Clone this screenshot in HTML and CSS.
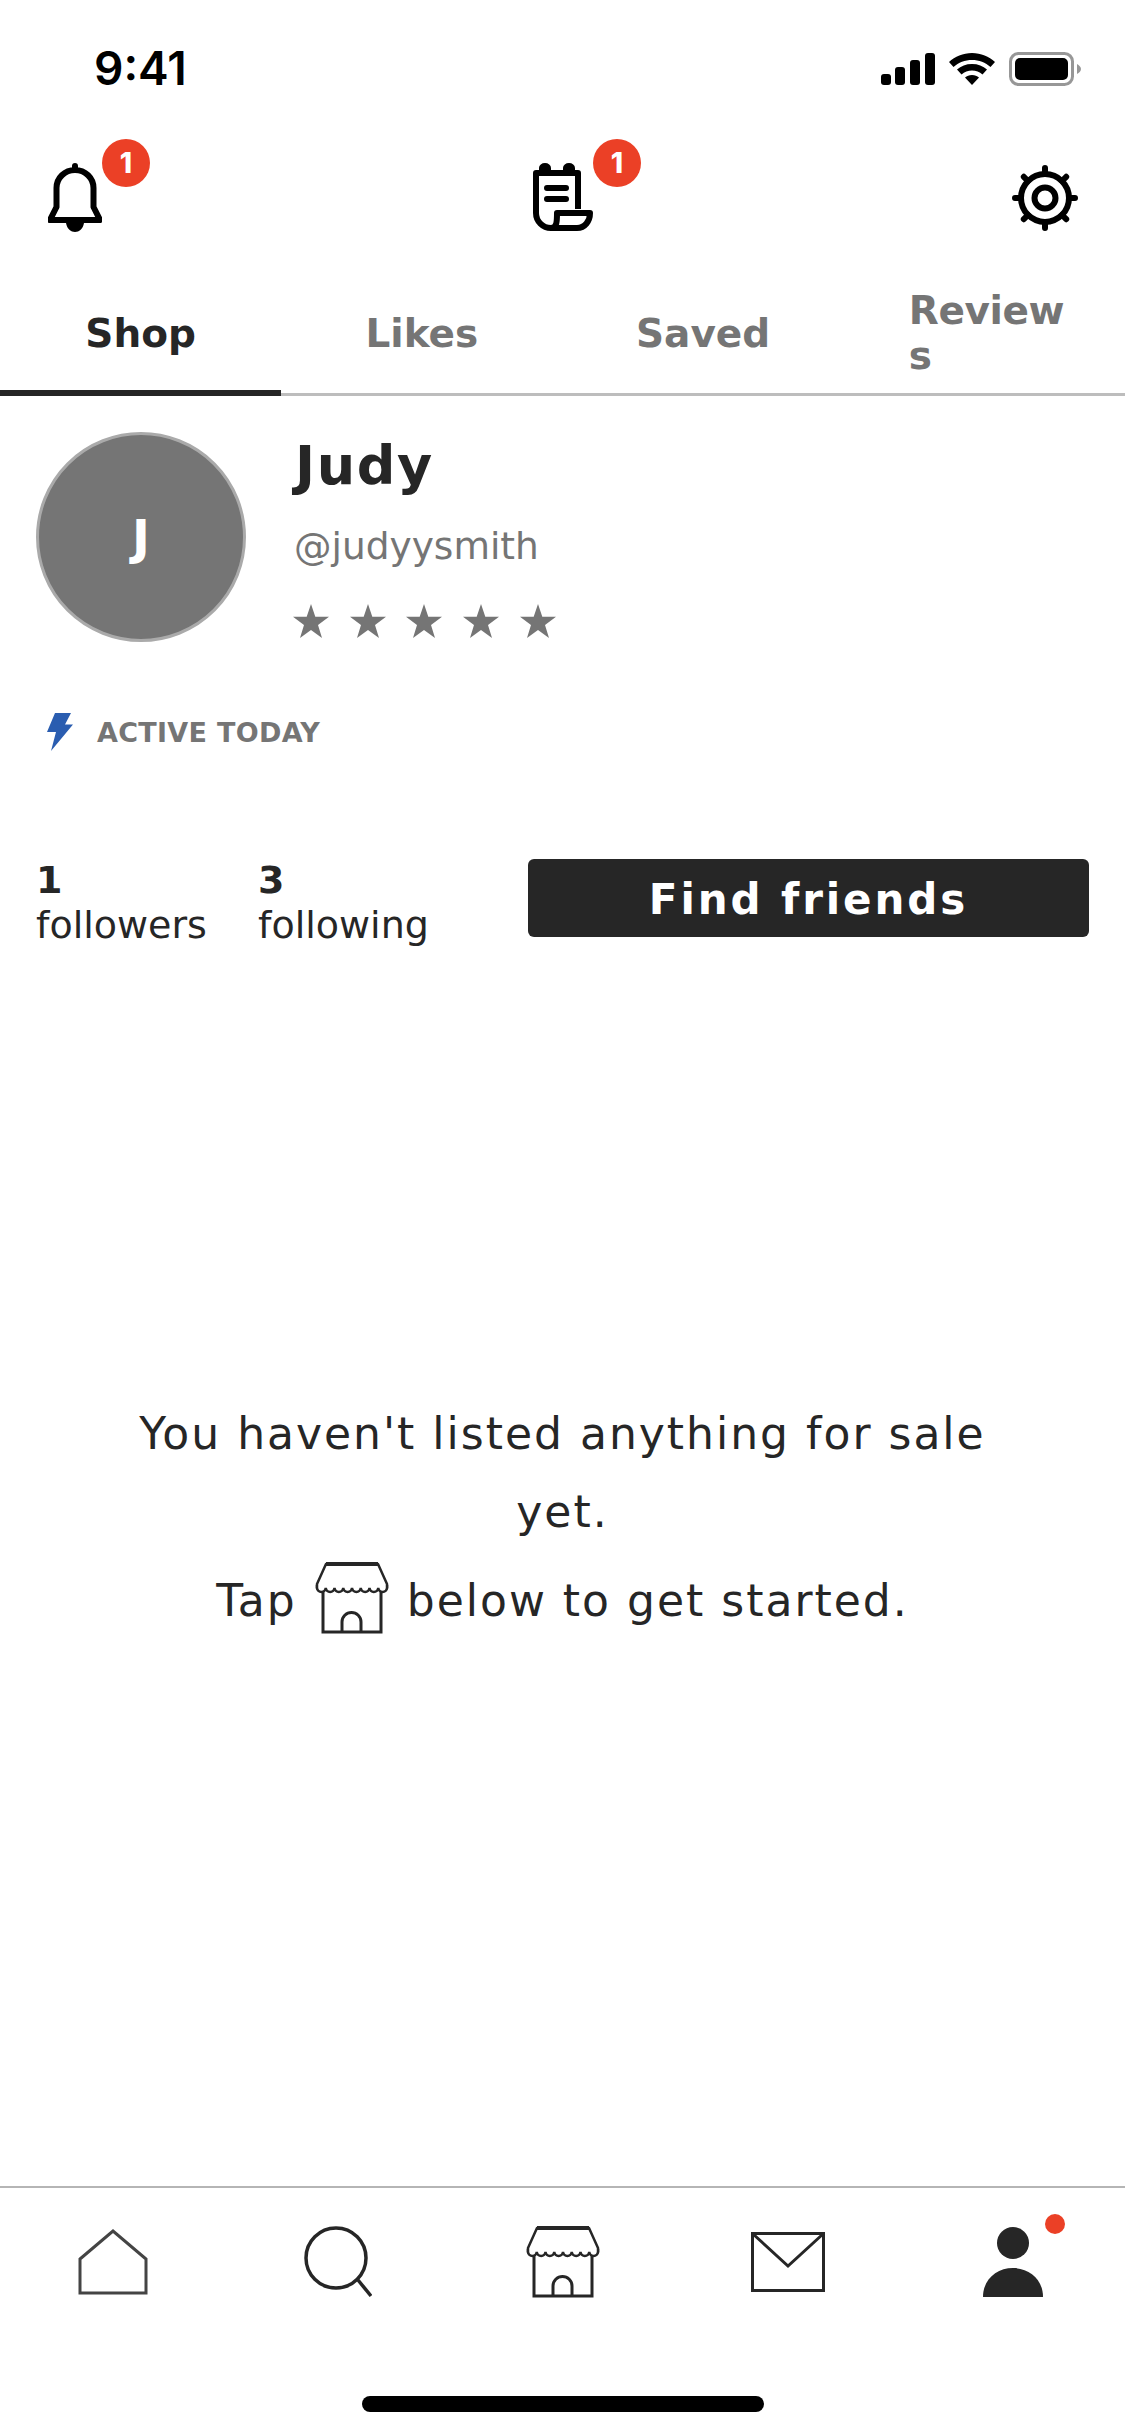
FILE: index.html
```html
<!DOCTYPE html>
<html>
	<head>
		<meta charset="UTF-8">
		<title>Profile</title>
		<link rel="stylesheet" href="styles.css">
	</head>
	<body>
		<svg class="defs" width="0" height="0">
			<symbol id="shop" viewBox="0 0 74 72">
				<path d="M11 2H63L72 22L72 26H2L2 22Z" fill="none" stroke="currentColor" stroke-width="2.500" stroke-linejoin="round"/>
				<path d="M11 2H63" stroke="currentColor" stroke-width="4"/>
				<path d="M2 23V26a4.400 4.500 0 0 0 8.750 0a4.400 4.500 0 0 0 8.750 0a4.400 4.500 0 0 0 8.750 0a4.400 4.500 0 0 0 8.750 0a4.400 4.500 0 0 0 8.750 0a4.400 4.500 0 0 0 8.750 0a4.400 4.500 0 0 0 8.750 0a4.400 4.500 0 0 0 8.750 0V23" fill="#fff" stroke="currentColor" stroke-width="2.500"/>
				<path d="M8 30V70H66V30M27 70V60a9.500 9.500 0 0 1 19 0V70" fill="none" stroke="currentColor" stroke-width="3"/>
			</symbol>
		</svg>
		<div class="status">
			<span class="time">9:41</span>
			<div class="status-icons">
				<svg width="54" height="32" viewBox="0 0 54 32"><rect x="0" y="21" width="10" height="11" rx="3"/><rect x="14" y="14" width="10" height="18" rx="3"/><rect x="29" y="7" width="10" height="25" rx="3"/><rect x="44" y="0" width="10" height="32" rx="3"/></svg>
				<svg width="46" height="32" viewBox="0 0 46 32"><path d="M23 0C14 0 6 3.500 0 9l4.500 5C9.500 9.500 16 7 23 7s13.500 2.500 18.500 7L46 9C40 3.500 32 0 23 0Z"/><path d="M23 11c-6 0-11 2-15 5.500l4.500 5C15.500 19 19 17.500 23 17.500s7.500 1.500 10.500 4l4.500-5C34 13 29 11 23 11Z"/><path d="M23 22c-3 0-5 1-7 2.500L23 32l7-7.500C28 23 26 22 23 22Z"/></svg>
				<svg width="72" height="34" viewBox="0 0 72 34"><rect x="1.500" y="1.500" width="62" height="31" rx="8" fill="none" stroke="#979797" stroke-width="3"/><rect x="6" y="6" width="53" height="22" rx="5"/><path d="M68 12c2 1 4 3 4 5s-2 4-4 5Z" fill="#979797"/></svg>
			</div>
		</div>
		<div class="top-bar">
			<a class="top-icon">
				<svg width="54" height="69" viewBox="0 0 54 69"><path d="M27 3V7M8.500 44V25a18.500 18 0 0 1 37 0V44L52 57H2Z" fill="none" stroke="#000" stroke-width="6" stroke-linecap="round" stroke-linejoin="round"/><path d="M18 60H36C35 66 31 69 27 69S19 66 18 60Z"/></svg>
				<span class="badge">1</span>
			</a>
			<a class="top-icon receipt">
				<svg width="60" height="68" viewBox="0 0 60 68"><path d="M45 46V10H3V50A15 15 0 0 0 18 65H44C52 65 57 58 57 50H24C24 58 24 65 18 65" fill="none" stroke="#000" stroke-width="6" stroke-linejoin="round"/><path d="M14 25H33M14 36H33" fill="none" stroke="#000" stroke-width="6" stroke-linecap="round"/><path d="M6 9H18V5a6 5 0 0 0-12 0ZM30 9H42V5a6 5 0 0 0-12 0Z"/></svg>
				<span class="badge">1</span>
			</a>
			<a class="top-icon gear">
				<svg width="66" height="66" viewBox="0 0 66 66" fill="none" stroke="#000" stroke-width="6" stroke-linecap="round"><circle cx="33" cy="33" r="24"/><circle cx="33" cy="33" r="10.500"/><path d="M33 3V9M33 57V63M3 33H9M57 33H63M11.800 11.800L16 16M50 50L54.200 54.200M11.800 54.200L16 50M50 16L54.200 11.800"/></svg>
			</a>
		</div>
		<div class="tabs">
			<div class="tab active"><span>Shop</span></div>
			<div class="tab"><span>Likes</span></div>
			<div class="tab"><span>Saved</span></div>
			<div class="tab"><span>Reviews</span></div>
		</div>
		<div class="profile">
			<div class="avatar">J</div>
			<div class="who">
				<div class="name">Judy</div>
				<div class="handle">@judyysmith</div>
				<div class="stars">
					<svg width="36" height="34" viewBox="0 0 36 34"><path d="M18 0L22.300 12.800H36L25 21L29 34L18 26L7 34L11 21L0 12.800H13.700Z"/></svg>
					<svg width="36" height="34" viewBox="0 0 36 34"><path d="M18 0L22.300 12.800H36L25 21L29 34L18 26L7 34L11 21L0 12.800H13.700Z"/></svg>
					<svg width="36" height="34" viewBox="0 0 36 34"><path d="M18 0L22.300 12.800H36L25 21L29 34L18 26L7 34L11 21L0 12.800H13.700Z"/></svg>
					<svg width="36" height="34" viewBox="0 0 36 34"><path d="M18 0L22.300 12.800H36L25 21L29 34L18 26L7 34L11 21L0 12.800H13.700Z"/></svg>
					<svg width="36" height="34" viewBox="0 0 36 34"><path d="M18 0L22.300 12.800H36L25 21L29 34L18 26L7 34L11 21L0 12.800H13.700Z"/></svg>
				</div>
			</div>
		</div>
		<div class="active-today">
			<svg width="26" height="38" viewBox="0 0 26 40" preserveAspectRatio="none"><path d="M8 0H24L18 12H26L4 40L9 20H0Z" fill="#2a5db0"/></svg>
			<span>ACTIVE TODAY</span>
		</div>
		<div class="stats">
			<div class="stat"><b>1</b><span>followers</span></div>
			<div class="stat"><b>3</b><span>following</span></div>
			<div class="find">Find friends</div>
		</div>
		<div class="empty">
			<p>You haven't listed anything for sale yet.</p>
			<p class="tap">Tap <svg class="tap-icon" width="74" height="72"><use href="#shop"/></svg> below to get started.</p>
		</div>
		<div class="nav">
			<div class="nav-item">
				<svg width="70" height="66" viewBox="0 0 70 66" fill="none" stroke="#444" stroke-width="3"><path d="M2 30L35 2L68 30V64H2Z"/></svg>
			</div>
			<div class="nav-item">
				<svg width="68" height="72" viewBox="0 0 68 72" fill="none" stroke="#262626" stroke-width="3.500"><circle cx="32" cy="32" r="30"/><path d="M54 54L67 70"/></svg>
			</div>
			<div class="nav-item">
				<svg width="74" height="72"><use href="#shop"/></svg>
			</div>
			<div class="nav-item">
				<svg width="74" height="60" viewBox="0 0 74 60" fill="none" stroke="#262626" stroke-width="3"><rect x="1.500" y="1.500" width="71" height="57"/><path d="M2 2L37 34L72 2"/></svg>
			</div>
			<div class="nav-item">
				<svg width="60" height="70" viewBox="0 0 60 70" fill="#262626"><circle cx="30" cy="16" r="16"/><path d="M0 70C0 52 14 41 30 41S60 52 60 70Z"/></svg>
				<span class="dot"></span>
			</div>
		</div>
		<div class="home-bar"><div class="home-line"></div></div>
	</body>
</html>
```

FILE: styles.css
```css
html,body{margin:0;padding:0;}
body{width:1125px;height:2436px;display:flex;flex-direction:column;background:#fff;color:#262626;font-family:"DejaVu Sans",sans-serif;overflow:hidden;}
.defs{position:absolute;}
svg{display:block;}

.status{height:132px;box-sizing:border-box;padding:44px 44px 0 94px;display:flex;justify-content:space-between;align-items:flex-start;}
.time{font-family:Inter,sans-serif;font-size:46px;line-height:48px;font-weight:600;color:#000;}
.status-icons{display:flex;align-items:center;gap:14px;padding-top:8px;}

.top-bar{height:148px;box-sizing:border-box;padding:31px 47px 0 48px;display:flex;justify-content:space-between;align-items:flex-start;}
.top-icon{position:relative;display:block;}
.receipt{margin-left:12px;}
.gear{margin-top:2px;}
.badge{position:absolute;top:-24px;right:-48px;width:48px;height:48px;border-radius:50%;background:#eb4026;color:#fff;font-family:Inter,sans-serif;font-size:28px;line-height:48px;font-weight:800;text-align:center;}

.tabs{display:grid;grid-template-columns:repeat(4,1fr);height:113px;border-bottom:3px solid #bdbdbd;}
.tab{display:flex;align-items:center;justify-content:center;padding:0 64px 10px;margin-bottom:-3px;font-size:39px;line-height:45px;font-weight:700;color:#757575;}
.tab span{word-break:break-all;}
.tab:last-child{justify-content:flex-start;padding:0 50px 10px 65px;letter-spacing:-.4px;}
.tab.active{color:#262626;box-shadow:inset 0 -6px 0 #262626;}

.profile{display:flex;padding:36px 36px 0;gap:48px;}
.avatar{width:210px;height:210px;box-sizing:border-box;border:3px solid #aaa;border-radius:50%;background:#757575;color:#fff;font-size:48px;font-weight:700;display:flex;align-items:center;justify-content:center;}
.name{font-size:54px;line-height:62px;font-weight:700;margin:3px 0 0 1px;letter-spacing:1.600px;}
.handle{font-size:37.500px;line-height:44px;font-weight:400;color:#757575;margin-top:27px;}
.stars{display:flex;gap:20.700px;margin:36px 0 0 -1px;fill:#757575;}

.active-today{display:flex;align-items:center;gap:24px;padding:70px 36px 0 47px;height:40px;color:#757575;font-size:27px;font-weight:700;letter-spacing:.3px;}

.stats{display:flex;align-items:flex-start;padding:105px 36px 0;}
.stat{width:222px;display:flex;flex-direction:column;}
.stat b{font-size:38px;line-height:46px;font-weight:700;}
.stat span{font-size:38px;line-height:44px;font-weight:400;}
.find{width:561px;height:78px;margin:2px 0 0 48px;border-radius:6px;background:#262626;color:#fff;font-size:42px;line-height:82px;font-weight:700;letter-spacing:2.900px;text-align:center;}

.empty{flex:1;padding:448px 130px 0;text-align:center;font-size:44px;line-height:78px;letter-spacing:2px;}
.empty p{margin:0;}
.tap{margin-top:11px!important;}
.tap-icon{display:inline-block;vertical-align:-18px;margin:0 2px;}

.nav{display:grid;grid-template-columns:repeat(5,1fr);height:118px;box-sizing:border-box;padding-top:32px;border-top:2px solid #b5b5b5;color:#262626;align-items:center;}
.nav-item{display:flex;justify-content:center;height:80px;align-items:center;position:relative;}
.dot{position:absolute;top:-8px;right:60px;width:20px;height:20px;border-radius:50%;background:#eb4026;}

.home-bar{height:132px;box-sizing:border-box;padding-top:92px;display:flex;justify-content:center;}
.home-line{width:402px;height:16px;border-radius:8px;background:#000;}
```
